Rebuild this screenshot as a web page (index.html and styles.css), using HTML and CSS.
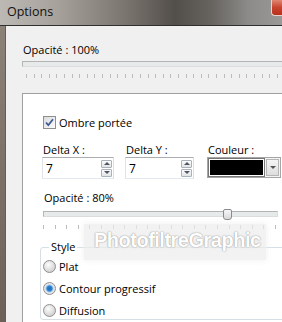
FILE: index.html
```html
<!DOCTYPE html>
<html lang="fr">
<head>
    <meta charset="UTF-8">
    <title>Options</title>
    <link rel="stylesheet" href="styles.css">
</head>
<body>
    <div class="window">
        <div class="titlebar">
            <span class="title">Options</span>
            <span class="close"></span>
        </div>
        <div class="frame">
            <div class="client">
                <div class="label">Opacité : 100%</div>
                <div class="slider wide">
                    <div class="track"></div>
                    <div class="ticks"></div>
                </div>

                <div class="panel">
                    <div class="check">
                        <span class="box">
                            <svg width="13" height="13" viewBox="0 0 13 13">
                                <path d="M3 6.5 L5.3 9.2 L10 3.2" fill="none" stroke="#3c5a9a" stroke-width="1.8"/>
                            </svg>
                        </span>
                        <span>Ombre portée</span>
                    </div>

                    <div class="fields">
                        <div class="field fx">
                            <div class="flabel">Delta X :</div>
                            <div class="spin">
                                <span class="value">7</span>
                                <div class="spin-btns">
                                    <span class="sbtn up"></span>
                                    <span class="sbtn down"></span>
                                </div>
                            </div>
                        </div>
                        <div class="field fy">
                            <div class="flabel">Delta Y :</div>
                            <div class="spin">
                                <span class="value">7</span>
                                <div class="spin-btns">
                                    <span class="sbtn up"></span>
                                    <span class="sbtn down"></span>
                                </div>
                            </div>
                        </div>
                        <div class="field fc">
                            <div class="flabel">Couleur :</div>
                            <div class="combo">
                                <span class="swatch"></span>
                                <span class="drop"></span>
                            </div>
                        </div>
                    </div>

                    <div class="label small">Opacité : 80%</div>
                    <div class="slider inner">
                        <div class="track"></div>
                        <span class="thumb"></span>
                        <div class="ticks"></div>
                    </div>

                    <div class="group">
                        <div class="legend">Style</div>
                        <div class="radio"><span class="dot"></span>Plat</div>
                        <div class="radio"><span class="dot on"></span>Contour progressif</div>
                        <div class="radio"><span class="dot"></span>Diffusion</div>
                    </div>
                </div>
            </div>
        </div>
        <div class="watermark">PhotofiltreGraphic</div>
    </div>
</body>
</html>
```

FILE: styles.css
```css
body {
    margin: 0;
    width: 282px;
    height: 322px;
    overflow: hidden;
    font-family: "Open Sans", "Noto Sans", sans-serif;
    font-size: 11px;
    color: #000;
}

.window {
    position: relative;
    height: 322px;
    display: flex;
    flex-direction: column;
    background: linear-gradient(180deg, #8e857b 0%, #7d7268 50%, #6c6159 100%);
}

/* Barre de titre (verre flou) */
.titlebar {
    height: 25px;
    display: flex;
    justify-content: space-between;
    align-items: flex-start;
    background: linear-gradient(90deg, #bcb8b3 0%, #a7a29c 20%, #7a746e 45%, #524e4a 62%, #676460 75%, #8c8b89 88%, #9a9997 100%);
    border-bottom: 1px solid #2f2f2f;
}

.title {
    padding: 4px 0 0 7px;
    font-size: 12.5px;
    line-height: 16px;
    color: #111;
}

.close {
    width: 10px;
    height: 15px;
    background: linear-gradient(180deg, #e08672 0%, #c7452f 50%, #b8301c 100%);
    border: 1px solid #e9d3cc;
    border-top: none;
    border-right: none;
    border-bottom-left-radius: 4px;
}

.frame {
    flex: 1;
    display: flex;
    padding-left: 5px;
    min-height: 0;
}

.client {
    flex: 1;
    display: flex;
    flex-direction: column;
    background-color: #f0f0f0;
    border-left: 1px solid #5e5e5e;
    padding: 16px 0 0 16px;
    overflow: hidden;
}

.label {
    line-height: 16px;
    padding-left: 1px;
}

/* Glissières */
.slider {
    position: relative;
    margin-top: 3px;
}

.track {
    height: 4px;
    background-color: #e7eaea;
    border: 1px solid #b4b4b4;
    border-bottom-color: #dcdcdc;
    border-right: none;
}

.ticks {
    height: 4px;
    margin-top: 7px;
    background: repeating-linear-gradient(90deg, transparent 0, transparent 4px, #bcbcbc 4px, #bcbcbc 5px, transparent 5px, transparent 7.6px);
}

.panel {
    flex: 1;
    margin-top: 15px;
    background-color: #fff;
    border-top: 1px solid #a0a0a0;
    border-left: 1px solid #a0a0a0;
    padding: 22px 0 0 20px;
}

.check {
    display: flex;
    align-items: center;
    height: 13px;
    line-height: 13px;
    gap: 3px;
}

.box {
    width: 13px;
    height: 13px;
    box-sizing: border-box;
    border: 1px solid #8e8f8f;
    background: linear-gradient(135deg, #dcdcdc, #fbfbfb);
    display: flex;
}

.box svg {
    margin: -1px;
}

.fields {
    display: flex;
    margin: 14px 0 0 -1px;
}

.flabel {
    height: 14px;
    line-height: 14px;
    padding-left: 1px;
}

.fx { width: 72px; }
.fy { width: 69px; margin-left: 11px; }
.fc { width: 74px; margin-left: 13px; }

.spin {
    height: 22px;
    box-sizing: border-box;
    border: 1px solid #abadb3;
    border-left-color: #e2e3ea;
    border-right-color: #dbdfe6;
    border-bottom-color: #e3e9ef;
    background-color: #fff;
    display: flex;
    justify-content: space-between;
    align-items: center;
    padding: 0 1px 0 3px;
    font-size: 12px;
}

.spin-btns {
    display: flex;
    flex-direction: column;
    gap: 1px;
}

.sbtn {
    width: 11px;
    height: 8px;
    box-sizing: border-box;
    border: 1px solid #a9b1ba;
    border-radius: 1px;
    background: linear-gradient(180deg, #fbfbfb, #e2e4e6);
    display: flex;
    align-items: center;
    justify-content: center;
}

.sbtn::after {
    content: "";
    border-left: 3px solid transparent;
    border-right: 3px solid transparent;
}

.up::after { border-bottom: 3px solid #4d5562; }
.down::after { border-top: 3px solid #4d5562; }

.combo {
    height: 21px;
    box-sizing: border-box;
    border: 1px solid #a5a5a5;
    background-color: #f4f4f4;
    display: flex;
    padding: 1px;
    gap: 1px;
}

.swatch {
    width: 53px;
    background-color: #000;
    border: 1px solid #fff;
    outline: 1px solid #777;
}

.drop {
    flex: 1;
    margin-left: 1px;
    border: 1px solid #b6b6b6;
    background: linear-gradient(180deg, #f5f5f5, #dedede);
    display: flex;
    align-items: center;
    justify-content: center;
}

.drop::after {
    content: "";
    border-left: 3px solid transparent;
    border-right: 3px solid transparent;
    border-top: 3px solid #555;
}

.label.small {
    margin-top: 11px;
}

.slider.inner {
    margin-top: 5px;
    width: 235px;
}

.inner .track {
    border-right: 1px solid #dcdcdc;
}

.inner .ticks {
    margin-top: 8px;
    background: repeating-linear-gradient(90deg, #bcbcbc 0, #bcbcbc 1px, transparent 1px, transparent 11.6px);
}

.thumb {
    position: absolute;
    left: 180px;
    top: -2px;
    width: 7px;
    height: 9px;
    border: 1px solid #8a8a8a;
    border-radius: 2px 2px 3px 3px;
    background: linear-gradient(180deg, #f6f6f6, #d8d8d8);
}

/* Groupe Style */
.group {
    position: relative;
    margin: 18px 0 0 -3px;
    width: 260px;
    height: 73px;
    box-sizing: border-box;
    border: 1px solid #d5dfe5;
    border-radius: 3px;
    padding: 12px 0 0 2px;
}

.legend {
    position: absolute;
    top: -9px;
    left: 8px;
    padding: 0 2px;
    background-color: #fff;
    line-height: 16px;
}

.radio {
    display: flex;
    align-items: center;
    gap: 3px;
    height: 13px;
    line-height: 13px;
    margin-bottom: 9px;
}

.dot {
    width: 13px;
    height: 13px;
    box-sizing: border-box;
    border-radius: 50%;
    border: 1px solid #8f8f8f;
    background: radial-gradient(circle at 40% 35%, #fdfdfd, #d4d4d4 70%);
}

.dot.on {
    background: radial-gradient(circle, #1f6fbb 0, #2a7fd0 2.5px, #9cc7ec 3.5px, #e8e8e8 4.5px, #dadada 100%);
}

/* Filigrane */
.watermark {
    position: absolute;
    left: 84px;
    top: 224px;
    width: 182px;
    height: 36px;
    box-sizing: border-box;
    padding: 5px 0 0 10px;
    background: rgba(236, 236, 236, 0.7);
    box-shadow: 0 0 6px rgba(236, 236, 236, 0.9);
    font-family: "Liberation Sans", Arial, sans-serif;
    font-weight: bold;
    font-size: 20px;
    letter-spacing: -0.5px;
    line-height: 22px;
    color: #fff;
    text-shadow: 0 0 1px #888, 0 0 2px #bbb;
}
```
